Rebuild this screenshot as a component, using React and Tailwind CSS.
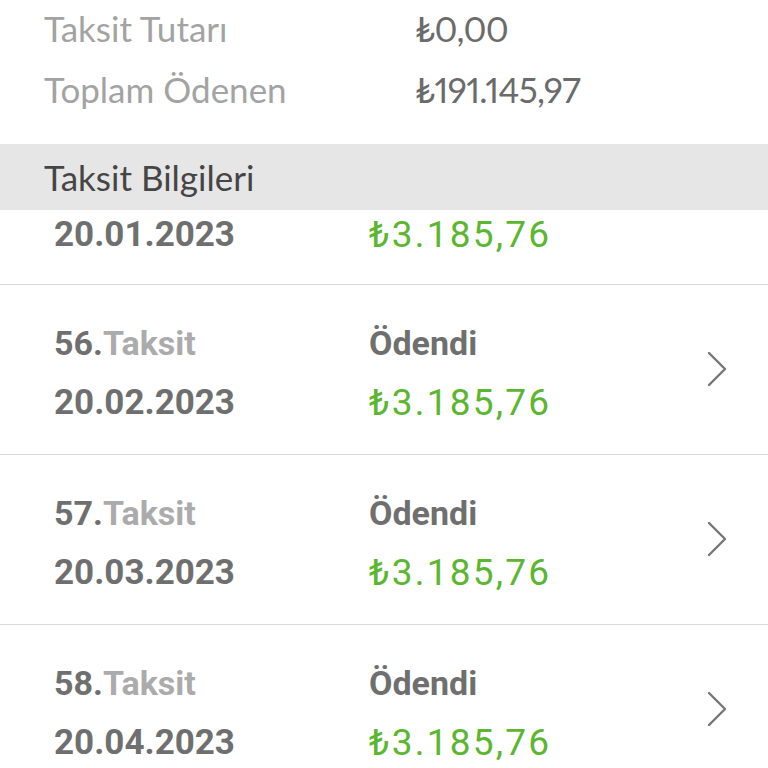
const rows = [
  { no: 56, date: '20.02.2023', amount: '₺3.185,76' },
  { no: 57, date: '20.03.2023', amount: '₺3.185,76' },
  { no: 58, date: '20.04.2023', amount: '₺3.185,76' },
];

function Chevron() {
  return (
    <svg width="22" height="36" viewBox="0 0 22 36" fill="none" className="mb-[2px]">
      <polyline points="3,2 19,18 3,34" stroke="#767676" strokeWidth="2.4" strokeLinecap="round" strokeLinejoin="round" />
    </svg>
  );
}

function Row({ row }) {
  return (
    <div className="h-[170px] border-b border-[#d9d9d9] flex items-center pl-[54px] pr-[40px] font-['Roboto',sans-serif]">
      <div className="w-[315px] flex flex-col gap-[22px] pt-[6px]">
        <div className="text-[34px] leading-[38px] font-bold">
          <span className="text-[#6f6f6f]">{row.no}.</span>
          <span className="text-[#ababab]">Taksit</span>
        </div>
        <div className="text-[35px] leading-[38px] font-bold text-[#6f6f6f]">{row.date}</div>
      </div>
      <div className="flex-1 flex flex-col gap-[22px] pt-[6px]">
        <div className="text-[34px] leading-[38px] font-bold text-[#6f6f6f]">Ödendi</div>
        <div className="text-[37px] leading-[38px] tracking-[0.06em] text-[#5bb630]">{row.amount}</div>
      </div>
      <Chevron />
    </div>
  );
}

export default function App() {
  return (
    <div className="w-[768px] h-[768px] overflow-hidden bg-white flex flex-col">
      <div className="h-[144px] pl-[44px] pt-[8px] font-['Lato',sans-serif] flex flex-col gap-[21px]">
        <div className="flex text-[35px] leading-[40px]">
          <span className="w-[371px] text-[#a3a3a3]">Taksit Tutarı</span>
          <span className="text-[#6b6b6b] proportional-nums tracking-[-0.02em]">₺0,00</span>
        </div>
        <div className="flex text-[35px] leading-[40px]">
          <span className="w-[371px] text-[#a3a3a3]">Toplam Ödenen</span>
          <span className="text-[#6b6b6b] proportional-nums tracking-[-0.02em]">₺191.145,97</span>
        </div>
      </div>
      <div className="h-[66px] bg-[#e6e6e6] pl-[44px] flex items-center font-['Lato',sans-serif] text-[35px] text-[#454545]">
        Taksit Bilgileri
      </div>
      <div className="flex-1 overflow-hidden">
        {/* list is scrolled: only the lower half of the 55th row shows */}
        <div className="h-[75px] border-b border-[#d9d9d9] flex items-end pb-[30px] pl-[54px] pr-[40px] font-['Roboto',sans-serif]">
          <div className="w-[315px] text-[35px] leading-[38px] font-bold text-[#6f6f6f]">20.01.2023</div>
          <div className="flex-1 text-[37px] leading-[38px] tracking-[0.06em] text-[#5bb630]">₺3.185,76</div>
        </div>
        {rows.map((r) => (
          <Row key={r.no} row={r} />
        ))}
      </div>
    </div>
  );
}
